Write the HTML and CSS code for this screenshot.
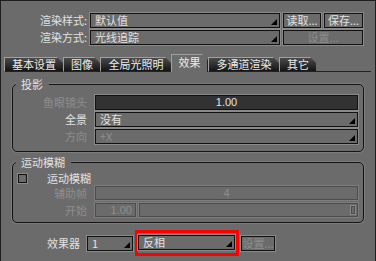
FILE: index.html
```html
<!DOCTYPE html>
<html>
<head>
<meta charset="utf-8">
<link rel="stylesheet" href="styles.css">
</head>
<body>
<div class="win">
  <div class="top">
    <div class="row">
      <span class="lbl">渲染样式:</span>
      <div class="dd w190"><span class="txt">默认值</span><i class="arr"></i></div>
      <div class="btn w38">读取...</div>
      <div class="btn w39">保存...</div>
    </div>
    <div class="row">
      <span class="lbl">渲染方式:</span>
      <div class="dd w190"><span class="txt">光线追踪</span><i class="arr"></i></div>
      <div class="btn w80 dis">设置...</div>
    </div>
  </div>

  <div class="tabs">
    <div class="tab t59">基本设置</div>
    <div class="tab t37">图像</div>
    <div class="tab t71">全局光照明</div>
    <div class="tab t37 active">效果</div>
    <div class="tab t71">多通道渲染</div>
    <div class="tab t37">其它</div>
    <div class="tabfill"></div>
  </div>

  <div class="grp g1">
    <span class="gtitle">投影</span>
    <div class="frow">
      <span class="flbl dim">鱼眼镜头</span>
      <div class="fld dark w263"><span class="num">1.00</span></div>
    </div>
    <div class="frow">
      <span class="flbl">全景</span>
      <div class="dd w263"><span class="txt">没有</span><i class="arr"></i></div>
    </div>
    <div class="frow">
      <span class="flbl dim">方向</span>
      <div class="dd w263 disdd"><span class="txt dim">+X</span><i class="arr"></i></div>
    </div>
  </div>

  <div class="grp g2">
    <span class="gtitle">运动模糊</span>
    <div class="crow">
      <span class="chk"></span>
      <span class="clbl">运动模糊</span>
    </div>
    <div class="frow2">
      <span class="flbl dim">辅助帧</span>
      <div class="fld disf w263"><span class="num dim">4</span></div>
    </div>
    <div class="frow2 gap3">
      <span class="flbl dim">开始</span>
      <div class="fld disf w41 right"><span class="num dim">1.00</span></div>
      <div class="fld disf slider"><span class="thumb"></span></div>
    </div>
  </div>

  <div class="brow">
    <span class="blbl">效果器</span>
    <div class="dd w46"><span class="txt">1</span><i class="arr"></i></div>
    <div class="hl">
      <div class="dd w97"><span class="txt">反相</span><i class="arr"></i></div>
    </div>
    <div class="btn w34 dis">设置...</div>
  </div>
</div>
</body>
</html>
```

FILE: styles.css
```css
* { box-sizing: border-box; margin: 0; padding: 0; }
body { margin: 0; background: #6b6b6b; }

.win {
  width: 376px;
  height: 261px;
  background: #6b6b6b;
  border-top: 1px solid #1e1e1e;
  border-left: 1px solid #1e1e1e;
  border-right: 1px solid #1e1e1e;
  font-family: "Noto Sans CJK SC", "Liberation Sans", sans-serif;
  font-size: 11px;
  color: #e2e2e2;
  overflow: hidden;
}

.dim { color: #8e8e8e; }

/* top rows */
.top { padding-top: 12px; display: flex; flex-direction: column; gap: 2px; }
.row { display: flex; align-items: center; height: 15px; }
.lbl { width: 86px; margin-right: 3px; text-align: right; line-height: 15px; white-space: nowrap; }

.dd, .btn, .fld {
  position: relative;
  height: 15px;
  border: 1px solid #111;
  box-shadow: 0 0 0 1px #8a8a8a;
  line-height: 13px;
  white-space: nowrap;
  flex: none;
}
.dd .txt { padding-left: 4px; }
.arr {
  position: absolute;
  right: 2px;
  bottom: 2px;
  width: 0;
  height: 0;
  border-left: 6px solid transparent;
  border-bottom: 6px solid #000;
}
.btn { text-align: center; margin-left: 3px; color: #e2e2e2; }
.btn.dis { color: #8e8e8e; }

.w190 { width: 190px; }
.w38 { width: 38px; }
.w39 { width: 39px; }
.w80 { width: 80px; }
.w263 { width: 263px; }
.w41 { width: 41px; }
.w46 { width: 46px; }
.w97 { width: 97px; }
.w34 { width: 34px; }

/* tabs */
.tabs { display: flex; align-items: flex-end; height: 17px; margin-top: 10px; padding-left: 3px; }
.tab {
  height: 15px;
  flex: none;
  text-align: center;
  line-height: 13px;
  color: #ececec;
  background: linear-gradient(#4a4a4a, #141414);
  border-top: 1px solid #a0a0a0;
  border-left: 1px solid #a0a0a0;
  border-bottom: 1px solid #222;
  clip-path: polygon(0 0, calc(100% - 6px) 0, 100% 6px, 100% 100%, 0 100%);
}
.tab.active {
  height: 18px;
  line-height: 15px;
  background: #6b6b6b;
  border-bottom: none;
  color: #ececec;
  border-right: 1px solid #222;
}
.t59 { width: 59px; }
.t37 { width: 37px; }
.t71 { width: 71px; }
.tabfill { width: 55px; border-bottom: 1px solid #222; height: 1px; }

/* groups */
.grp {
  position: relative;
  margin-left: 11px;
  width: 352px;
  border: 1px solid #151515;
  border-radius: 5px;
  box-shadow: 0 0 0 1px #7c7c7c;
  padding-right: 5px;
}
.g1 { margin-top: 12px; padding-top: 10px; padding-bottom: 7px; display: flex; flex-direction: column; gap: 2px; }
.g2 { margin-top: 10px; padding-top: 9px; padding-bottom: 5px; }
.gtitle {
  position: absolute;
  top: -8px;
  left: 3px;
  padding: 0 6px 0 5px;
  background: #6b6b6b;
  line-height: 14px;
  color: #e2e2e2;
}
.frow { display: flex; align-items: center; height: 15px; }
.frow2 { display: flex; align-items: center; height: 14px; margin-top: 1px; }
.frow2.gap3 { margin-top: 3px; }
.frow2 .fld { height: 14px; line-height: 12px; }
.flbl { width: 74px; margin-right: 8px; text-align: right; line-height: 15px; white-space: nowrap; flex: none; }

.fld.dark { background: #323232; }
.fld .num { display: block; text-align: center; font-family: "Liberation Sans", sans-serif; }
.fld.right .num { text-align: right; padding-right: 3px; }
.fld.disf { border-color: #4c4c4c; box-shadow: 0 0 0 1px #7e7e7e; }
.disdd { }
.slider { width: 219px; margin-left: 3px; }
.thumb {
  position: absolute;
  right: 1px;
  top: 1px;
  width: 6px;
  height: 10px;
  border: 1px solid #8a8a8a;
  box-shadow: inset 0 0 0 1px #4c4c4c;
}

.crow { display: flex; align-items: center; height: 13px; }
.chk {
  width: 9px;
  height: 9px;
  margin-left: 5px;
  border: 1px solid #111;
  box-shadow: 0 0 0 1px #8a8a8a;
  flex: none;
}
.clbl { margin-left: 20px; line-height: 13px; }

/* bottom row */
.brow { display: flex; align-items: center; height: 26px; margin-top: 7px; }
.blbl { width: 79px; margin-right: 7px; text-align: right; white-space: nowrap; }
.hl {
  border: 3px solid #ff0000;
  padding: 2px 1px 3px 0;
  margin: 0 0 0 2px;
  flex: none;
}
.brow .btn { margin-left: 2px; }
```
